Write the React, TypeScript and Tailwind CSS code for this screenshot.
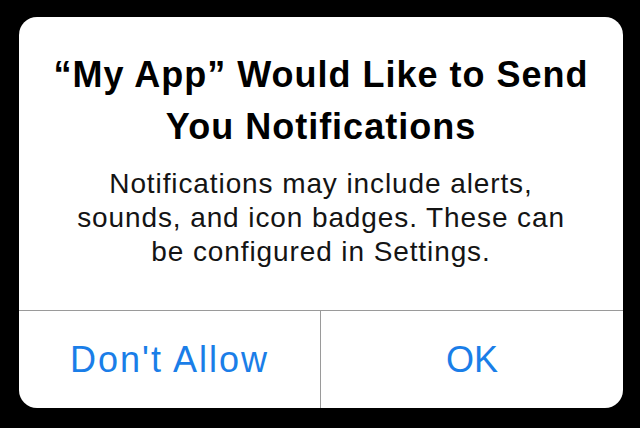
import React from "react";

export default function App() {
  return (
    <div className="w-[640px] h-[428px] bg-black pt-[17px] pl-[19px]" style={{ fontFamily: '"Liberation Sans", Arial, sans-serif' }}>
      <div className="w-[604px] h-[391px] bg-white rounded-[18px] overflow-hidden flex flex-col">
        <div className="h-[293px] flex flex-col items-center pt-[32px]">
          <div className="text-[36px] leading-[52px] font-bold tracking-[1px] text-black text-center">
            <div>“My App” Would Like to Send</div>
            <div>You Notifications</div>
          </div>
          <div className="mt-[14px] text-[28px] leading-[34px] tracking-[0.9px] text-[#141414] text-center">
            <div>Notifications may include alerts,</div>
            <div>sounds, and icon badges. These can</div>
            <div>be configured in Settings.</div>
          </div>
        </div>
        <div className="flex-1 flex border-t border-[#9a9a9a]">
          <div className="w-[302px] flex items-center justify-center border-r border-[#9a9a9a] text-[36px] tracking-[2px] text-[#1a7ee8]">
            Don't Allow
          </div>
          <div className="flex-1 flex items-center justify-center text-[36px] text-[#1a7ee8]">
            OK
          </div>
        </div>
      </div>
    </div>
  );
}
